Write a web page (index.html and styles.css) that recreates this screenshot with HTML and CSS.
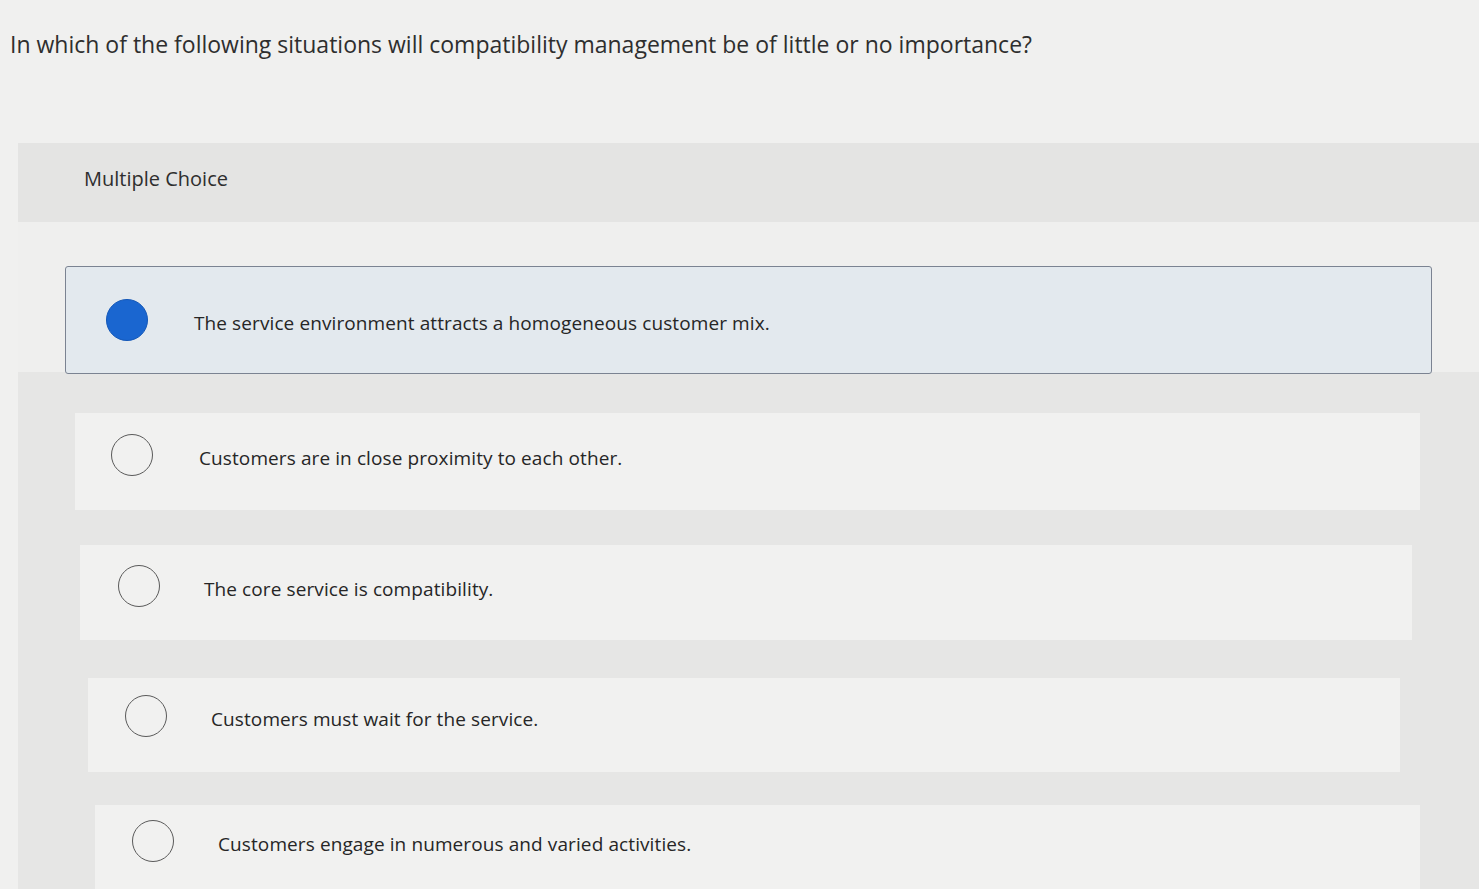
FILE: index.html
```html
<!DOCTYPE html>
<html lang="en">
<head>
<meta charset="utf-8">
<title>Multiple Choice</title>
<link rel="stylesheet" href="styles.css">
</head>
<body>
  <h1 class="question">In which of the following situations will compatibility management be of little or no importance?</h1>
  <section class="panel">
    <div class="panel-head">Multiple Choice</div>
    <div class="options">
      <label class="option option-selected">
        <span class="radio radio-on"></span>
        <span class="option-text">The service environment attracts a homogeneous customer mix.</span>
      </label>
      <label class="option option-b">
        <span class="radio"></span>
        <span class="option-text">Customers are in close proximity to each other.</span>
      </label>
      <label class="option option-c">
        <span class="radio"></span>
        <span class="option-text">The core service is compatibility.</span>
      </label>
      <label class="option option-d">
        <span class="radio"></span>
        <span class="option-text">Customers must wait for the service.</span>
      </label>
      <label class="option option-e">
        <span class="radio"></span>
        <span class="option-text">Customers engage in numerous and varied activities.</span>
      </label>
    </div>
  </section>
</body>
</html>
```

FILE: styles.css
```css
html, body {
  margin: 0;
  padding: 0;
}
body {
  background: #f0f0ef;
  font-family: "Open Sans", Lato, "Liberation Sans", sans-serif;
  color: #2f2f2f;
  width: 1479px;
  height: 889px;
  overflow: hidden;
}
.question {
  margin: 0;
  padding: 28px 0 0 10px;
  height: 143px;
  box-sizing: border-box;
  font-size: 23px;
  font-weight: 400;
  color: #2e2e2e;
}
.panel {
  margin-left: 18px;
  background: #e7e7e6;
}
.panel-head {
  height: 79px;
  box-sizing: border-box;
  padding: 22px 0 0 66px;
  background: #e4e4e3;
  font-size: 20px;
  color: #2e2e2e;
}
.options {
  display: flex;
  flex-direction: column;
  padding: 44px 0 40px;
  background: linear-gradient(#efefee 0, #efefee 150px, #e6e6e5 150px);
}
.option {
  display: flex;
  align-items: center;
  box-sizing: border-box;
  background: #f1f1f0;
  font-size: 19px;
  letter-spacing: 0.1px;
  color: #262626;
}
.option-selected {
  margin-left: 47px;
  width: 1367px;
  height: 108px;
  padding-left: 40px;
  background: #e3e9ee;
  border: 1.5px solid #7b8392;
  border-radius: 3px;
}
.option-b {
  margin: 39px 0 0 57px;
  width: 1345px;
  height: 97px;
  padding: 0 0 13px 36px;
}
.option-c {
  margin: 35px 0 0 62px;
  width: 1332px;
  height: 95px;
  padding: 0 0 13px 38px;
}
.option-d {
  margin: 38px 0 0 70px;
  width: 1312px;
  height: 94px;
  padding: 0 0 18px 37px;
}
.option-e {
  margin: 33px 0 0 77px;
  width: 1325px;
  height: 84px;
  padding: 0 0 12px 37px;
}
.radio {
  flex: none;
  width: 42px;
  height: 42px;
  box-sizing: border-box;
  border: 1.6px solid #5a5a5a;
  border-radius: 50%;
  margin-right: 44px;
}
.radio-on {
  background: #1a66d0;
  border: 1px solid #1357b8;
}
.option-selected .radio {
  margin-right: 46px;
}
.option-b .radio {
  margin-right: 46px;
}
.option-text {
  white-space: nowrap;
  padding-top: 5px;
}
```
